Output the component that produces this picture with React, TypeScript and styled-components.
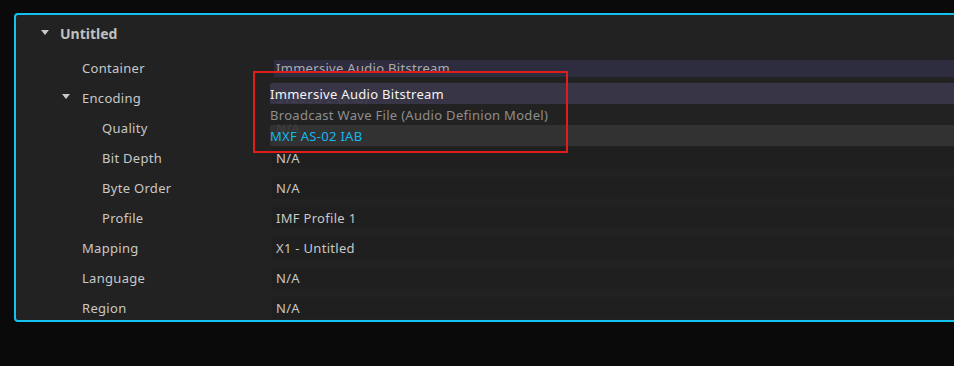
import styled, { createGlobalStyle } from 'styled-components';

const GlobalStyle = createGlobalStyle`
  html, body {
    margin: 0;
    background: #0a0a0a;
    overflow: hidden;
  }
  body {
    font-family: "Noto Sans", "Open Sans", sans-serif;
    font-size: 13px;
    letter-spacing: 0.3px;
    color: #c8c8c8;
  }
`;

const Page = styled.div`
  position: relative;
  width: 954px;
  height: 366px;
  padding: 13px 0 0 14px;
  box-sizing: border-box;
`;

const Panel = styled.div`
  position: relative;
  width: 960px;
  height: 309px;
  box-sizing: border-box;
  border: 2px solid #12c3f1;
  border-radius: 4px;
  background: #222222;
`;

const Header = styled.div`
  display: flex;
  align-items: center;
  gap: 11px;
  height: 37px;
  padding-left: 25px;
  padding-bottom: 1px;
  font-weight: 700;
  font-size: 14px;
  letter-spacing: 0;
  color: #c0c0c0;
`;

const Caret = styled.span`
  width: 0;
  height: 0;
  border-left: 4px solid transparent;
  border-right: 4px solid transparent;
  border-top: 5px solid #c8c8c8;
  margin-top: -3px;
`;

const Rows = styled.div`
  display: flex;
  flex-direction: column;
`;

const Row = styled.div`
  display: grid;
  grid-template-columns: 256px 1fr;
  align-items: center;
  height: 30px;
`;

const Label = styled.div<{ $depth: number; $caret?: boolean }>`
  display: flex;
  align-items: center;
  gap: 12px;
  padding-left: ${(p) => (p.$caret ? 46 : 66 + (p.$depth - 1) * 20)}px;
  color: #c8c8c8;
`;

const Value = styled.div<{ $selected?: boolean }>`
  display: flex;
  align-items: center;
  height: ${(p) => (p.$selected ? 17 : 22)}px;
  margin-left: ${(p) => (p.$selected ? 2 : 0)}px;
  padding-left: ${(p) => (p.$selected ? 2 : 4)}px;
  background: ${(p) => (p.$selected ? '#2e2c3f' : '#1f1f1f')};
  color: ${(p) => (p.$selected ? '#ababb0' : '#c8c8c8')};
  overflow: hidden;
  white-space: nowrap;
`;

const Menu = styled.div`
  position: absolute;
  left: 254px;
  top: 68px;
  right: 0;
  display: flex;
  flex-direction: column;
`;

const MenuItem = styled.div<{ $tone: 'active' | 'plain' | 'current' }>`
  display: flex;
  align-items: center;
  height: 21px;
  white-space: nowrap;
  background: ${(p) =>
    p.$tone === 'active'
      ? 'rgba(57, 55, 73, 0.93)'
      : p.$tone === 'current'
      ? 'rgba(52, 52, 52, 0.93)'
      : 'rgba(34, 34, 34, 0.9)'};
  color: ${(p) =>
    p.$tone === 'active' ? '#f4f4f4' : p.$tone === 'current' ? '#14b8ec' : '#8e8e8e'};
  border-radius: ${(p) => (p.$tone === 'plain' ? 0 : 2)}px 0 0 ${(p) => (p.$tone === 'plain' ? 0 : 2)}px;
`;

const Annotation = styled.div`
  position: absolute;
  left: 253px;
  top: 71px;
  width: 315px;
  height: 82px;
  box-sizing: border-box;
  border: 2px solid #e01d1d;
  pointer-events: none;
`;

const fields = [
  { label: 'Container', value: 'Immersive Audio Bitstream', depth: 1, selected: true },
  { label: 'Encoding', value: 'ST2098-2 (IAB)', depth: 1, caret: true },
  { label: 'Quality', value: 'N/A', depth: 2 },
  { label: 'Bit Depth', value: 'N/A', depth: 2 },
  { label: 'Byte Order', value: 'N/A', depth: 2 },
  { label: 'Profile', value: 'IMF Profile 1', depth: 2 },
  { label: 'Mapping', value: 'X1 - Untitled', depth: 1 },
  { label: 'Language', value: 'N/A', depth: 1 },
  { label: 'Region', value: 'N/A', depth: 1 },
];

const options: { text: string; tone: 'active' | 'plain' | 'current' }[] = [
  { text: 'Immersive Audio Bitstream', tone: 'active' },
  { text: 'Broadcast Wave File (Audio Definion Model)', tone: 'plain' },
  { text: 'MXF AS-02 IAB', tone: 'current' },
];

function App() {
  return (
    <>
      <GlobalStyle />
      <Page>
        <Panel>
          <Header>
            <Caret />
            Untitled
          </Header>
          <Rows>
            {fields.map(({ label, value, depth, selected, caret }) => (
              <Row key={label}>
                <Label $depth={depth} $caret={caret}>
                  {caret && <Caret />}
                  {label}
                </Label>
                <Value $selected={selected}>{value}</Value>
              </Row>
            ))}
          </Rows>
          <Menu>
            {options.map(({ text, tone }) => (
              <MenuItem key={text} $tone={tone}>
                {text}
              </MenuItem>
            ))}
          </Menu>
        </Panel>
        <Annotation />
      </Page>
    </>
  );
}

export default App;
